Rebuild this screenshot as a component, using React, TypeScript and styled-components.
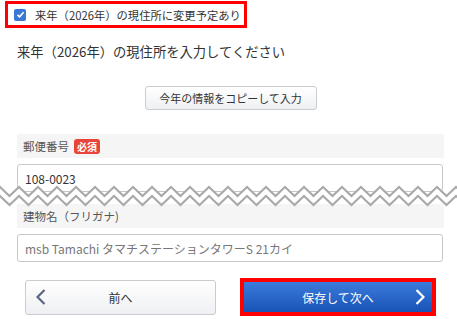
import styled, { createGlobalStyle } from "styled-components";

const GlobalStyle = createGlobalStyle`
  html, body {
    margin: 0;
    padding: 0;
    background: #ffffff;
  }
  body {
    font-family: "Noto Sans CJK JP", "Noto Sans", sans-serif;
    color: #333333;
  }
`;

const Page = styled.div`
  width: 457px;
  height: 319px;
  overflow: hidden;
`;

// チェックボックス（赤枠で強調）
const Notice = styled.label`
  display: flex;
  align-items: center;
  gap: 9px;
  box-sizing: border-box;
  width: 242px;
  height: 27px;
  margin: 1px 0 0 5px;
  padding-left: 6px;
  border: 3px solid #ff0000;
  font-size: 11.3px;
  white-space: nowrap;
  color: #333;
`;

const CheckBox = styled.span`
  flex: none;
  display: inline-flex;
  align-items: center;
  justify-content: center;
  width: 12px;
  height: 12px;
  border-radius: 2px;
  background: #3b78d6;
`;

const Body = styled.div`
  padding: 0 13px 0 17px;
`;

const Heading = styled.h2`
  margin: 14px 0 0;
  font-size: 13.3px;
  line-height: 20px;
  font-weight: normal;
  color: #333;
`;

const CopyRow = styled.div`
  display: flex;
  justify-content: center;
  margin-top: 24px;
`;

const CopyButton = styled.button`
  box-sizing: border-box;
  width: 172px;
  height: 24px;
  padding: 0;
  border: 1px solid #c9ccd1;
  border-radius: 3px;
  background: linear-gradient(#ffffff, #eef0f3);
  font-family: inherit;
  font-size: 11px;
  color: #333;
`;

const Form = styled.div`
  position: relative;
  display: flex;
  flex-direction: column;
  gap: 12px;
  margin-top: 24px;
`;

const Field = styled.div`
  display: flex;
  flex-direction: column;
  gap: 6px;
`;

const LabelBar = styled.div`
  display: flex;
  align-items: center;
  gap: 5px;
  height: 24px;
  padding-left: 6px;
  background: #f5f5f5;
  font-size: 11.5px;
  color: #555;
`;

const Badge = styled.span`
  display: inline-flex;
  align-items: center;
  height: 15px;
  padding: 0 3px;
  border-radius: 3px;
  background: #e8443a;
  color: #fff;
  font-size: 10px;
  font-weight: bold;
`;

const TextInput = styled.input<{ $muted?: boolean }>`
  box-sizing: border-box;
  width: 426px;
  height: 28px;
  margin: 0;
  padding: 0 7px;
  border: 1px solid #c8c8c8;
  border-radius: 3px;
  background: #fff;
  font-family: inherit;
  font-size: 12px;
  color: ${(p) => (p.$muted ? "#777" : "#333")};
  outline: none;
  &::placeholder {
    color: #777;
  }
`;

// 省略を示すギザギザ線
const Cut = styled.svg`
  position: absolute;
  left: -17px;
  top: 51px;
  width: 457px;
  height: 24px;
`;

const ButtonRow = styled.div`
  display: grid;
  grid-template-columns: 191px 196px;
  gap: 24px;
  align-items: center;
  margin-top: 16px;
  padding: 0 8px;
`;

const NavButton = styled.button<{ $primary?: boolean }>`
  position: relative;
  box-sizing: border-box;
  display: flex;
  align-items: center;
  justify-content: center;
  width: 100%;
  height: ${(p) => (p.$primary ? "38px" : "35px")};
  padding: 0;
  border: ${(p) => (p.$primary ? "4px solid #ff0000" : "1px solid #c9ccd1")};
  border-radius: ${(p) => (p.$primary ? "0" : "3px")};
  background: ${(p) =>
    p.$primary
      ? "linear-gradient(#3b7bdc, #1853b5)"
      : "linear-gradient(#ffffff, #eef0f3)"};
  font-family: inherit;
  font-size: 12px;
  color: ${(p) => (p.$primary ? "#ffffff" : "#333")};
`;

const Chevron = styled.svg<{ $side: "left" | "right" }>`
  position: absolute;
  top: 50%;
  margin-top: -8px;
  ${(p) => (p.$side === "left" ? "left: 10px;" : "right: 7px;")}
`;

function zigzag(offset: number) {
  const pts: string[] = [];
  for (let x = -19, i = 0; x <= 476; x += 9.5, i++) {
    pts.push(`${x},${(i % 2 === 0 ? 2 : 11) + offset}`);
  }
  return pts;
}

export default function App() {
  const top = zigzag(0);
  const bottom = zigzag(9);
  const fill = [...top, ...bottom.slice().reverse()].join(" ");

  return (
    <>
      <GlobalStyle />
      <Page>
        <Notice>
          <CheckBox>
            <svg width="9" height="9" viewBox="0 0 9 9">
              <polyline
                points="1.5,4.8 3.6,6.8 7.6,2.2"
                fill="none"
                stroke="#fff"
                strokeWidth="1.6"
              />
            </svg>
          </CheckBox>
          来年（2026年）の現住所に変更予定あり
        </Notice>
        <Body>
          <Heading>来年（2026年）の現住所を入力してください</Heading>
          <CopyRow>
            <CopyButton>今年の情報をコピーして入力</CopyButton>
          </CopyRow>
          <Form>
            <Field>
              <LabelBar>
                郵便番号<Badge>必須</Badge>
              </LabelBar>
              <TextInput readOnly defaultValue="108-0023" />
            </Field>
            <Field>
              <LabelBar>建物名（フリガナ)</LabelBar>
              <TextInput
                $muted
                readOnly
                placeholder="msb Tamachi タマチステーションタワーS 21カイ"
              />
            </Field>
            <Cut viewBox="0 0 457 24">
              <polygon points={fill} fill="#fff" />
              <polyline
                points={top.join(" ")}
                fill="none"
                stroke="#a9a9a9"
                strokeWidth="2"
              />
              <polyline
                points={bottom.join(" ")}
                fill="none"
                stroke="#a9a9a9"
                strokeWidth="2"
              />
            </Cut>
          </Form>
          <ButtonRow>
            <NavButton>
              <Chevron $side="left" width="10" height="16" viewBox="0 0 10 16">
                <polyline
                  points="8.5,1 1.5,8 8.5,15"
                  fill="none"
                  stroke="#5b6682"
                  strokeWidth="2.2"
                />
              </Chevron>
              前へ
            </NavButton>
            <NavButton $primary>
              保存して次へ
              <Chevron $side="right" width="10" height="16" viewBox="0 0 10 16">
                <polyline
                  points="1.5,1 8.5,8 1.5,15"
                  fill="none"
                  stroke="#fff"
                  strokeWidth="2.2"
                />
              </Chevron>
            </NavButton>
          </ButtonRow>
        </Body>
      </Page>
    </>
  );
}
